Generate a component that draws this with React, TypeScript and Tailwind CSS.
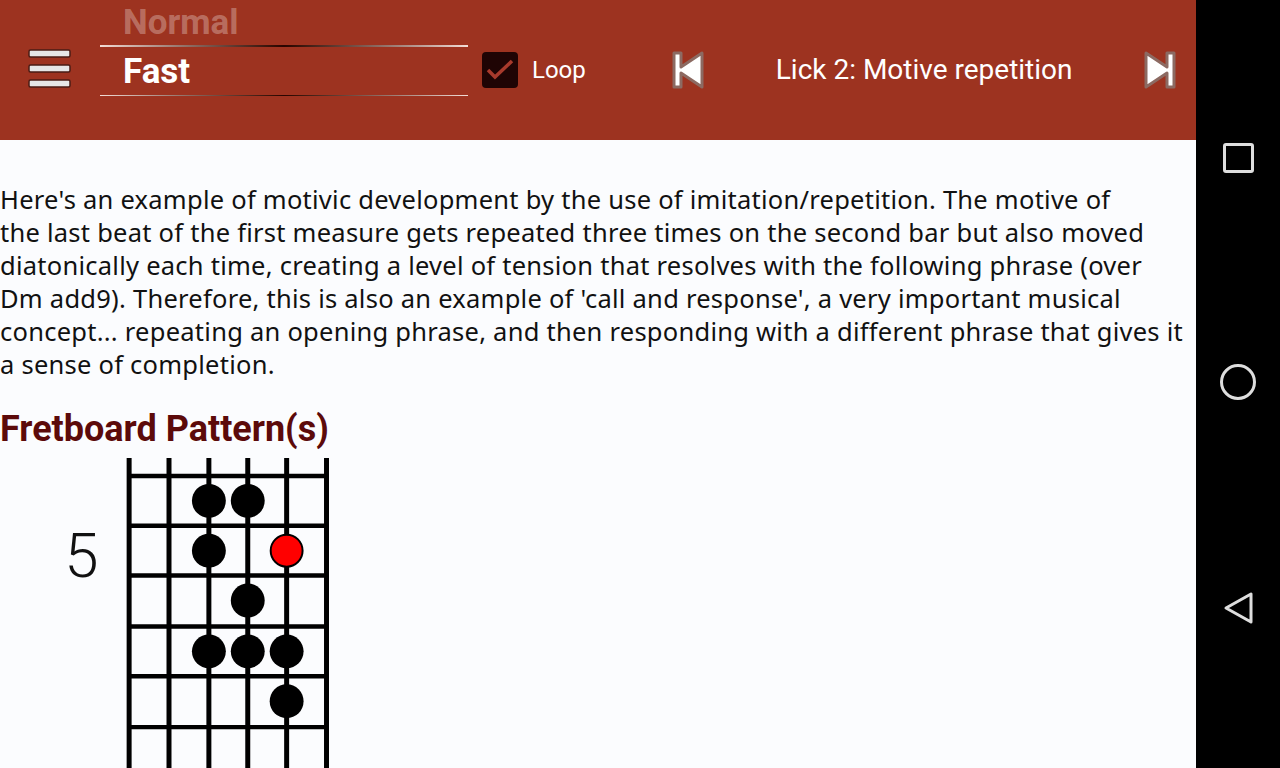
import React from 'react'

const ROBOTO = { fontFamily: 'Roboto, "Noto Sans", sans-serif' }
const BODY = { fontFamily: '"Noto Sans", Roboto, sans-serif' }

function Hamburger() {
  return (
    <svg width="44" height="42" viewBox="0 0 44 42" className="block">
      {[1, 16, 31].map(y => (
        <rect key={y} x="1" y={y} width="41" height="7" rx="1.5" fill="#e6e6e6" stroke="#4a1c14" strokeWidth="1.5" />
      ))}
    </svg>
  )
}

function PickerLine() {
  return <div className="h-[1.5px] w-full bg-linear-to-r from-[#f3ddd6] via-[#2a0400] to-[#f3ddd6]" />
}

function SkipIcon({ dir }: { dir: 'prev' | 'next' }) {
  const shape =
    dir === 'prev'
      ? 'M3 3 H10 V17 L31 3 V37 L10 23 V37 H3 Z'
      : 'M31 3 H24 V17 L3 3 V37 L24 23 V37 H31 Z'
  return (
    <svg width="34" height="40" viewBox="0 0 34 40" className="block">
      <path d={shape} fill="#ffffff" stroke="#8c6a62" strokeWidth="3" strokeLinejoin="round" />
    </svg>
  )
}

function Header() {
  return (
    <div className="flex h-[140px] bg-[#9d3320] text-white" style={ROBOTO}>
      <div className="w-[100px] pl-[28px] pt-[49px]">
        <Hamburger />
      </div>
      <div className="flex w-[368px] flex-col">
        <div className="h-[45px] pl-[23px] text-[35px] font-bold leading-[45px] text-white/30">Normal</div>
        <PickerLine />
        <div className="h-[48px] pl-[23px] pt-[1px] text-[35px] font-bold leading-[48px] text-white">Fast</div>
        <PickerLine />
      </div>
      <div className="flex h-[140px] items-center">
        <div className="ml-[14px] flex h-[36px] w-[36px] items-center justify-center rounded-[4px] bg-[#1f0404]">
          <svg width="36" height="36" viewBox="0 0 36 36">
            <path d="M6 18 L13 25 L30 9" fill="none" stroke="#a83a2c" strokeWidth="3.5" />
          </svg>
        </div>
        <span className="ml-[14px] text-[24px] leading-none">Loop</span>
        <div className="ml-[85px]">
          <SkipIcon dir="prev" />
        </div>
        <span className="ml-[71px] text-[28px] leading-none">Lick 2: Motive repetition</span>
        <div className="ml-[70px]">
          <SkipIcon dir="next" />
        </div>
      </div>
    </div>
  )
}

function Fretboard() {
  const strings = [129, 169, 209, 248, 287, 327]
  const frets = [27, 77, 127, 178, 228, 279]
  const dots: [number, number, boolean][] = [
    [209, 52, false],
    [248, 52, false],
    [209, 102, false],
    [287, 102, true],
    [248, 152, false],
    [209, 203, false],
    [248, 203, false],
    [287, 203, false],
    [287, 253, false],
  ]
  return (
    <svg width="340" height="320" viewBox="0 0 340 320" className="block">
      {strings.map(x => (
        <line key={'s' + x} x1={x} y1="9" x2={x} y2="320" stroke="#000" strokeWidth="5" />
      ))}
      {frets.map(y => (
        <line key={'f' + y} x1="127" y1={y} x2="329" y2={y} stroke="#000" strokeWidth="4.5" />
      ))}
      {dots.map(([x, y, red]) => (
        <circle key={x + '-' + y} cx={x} cy={y} r={red ? 16 : 17} fill={red ? '#ff0000' : '#000'} stroke="#000" strokeWidth={red ? 2 : 0} />
      ))}
      <text x="64" y="128" fontSize="62" fontWeight="300" fill="#111" style={ROBOTO}>5</text>
    </svg>
  )
}

function NavBar() {
  return (
    <div className="flex w-[84px] flex-col items-center justify-center gap-[191px] bg-black">
      <div className="h-[30px] w-[31px] rounded-[3px] border-[3px] border-[#dedede]" />
      <div className="h-[36px] w-[36px] rounded-full border-[3px] border-[#dedede]" />
      <svg width="32" height="34" viewBox="0 0 32 34" className="block">
        <path d="M29 3 L29 31 L4 17 Z" fill="none" stroke="#dedede" strokeWidth="3" strokeLinejoin="round" />
      </svg>
    </div>
  )
}

export default function App() {
  return (
    <div className="flex h-[768px] w-[1280px] overflow-hidden">
      <div className="flex w-[1196px] flex-col overflow-hidden bg-[#fbfcfe]">
        <Header />
        <p className="mt-[43px] whitespace-nowrap text-[25.5px] leading-[33px] tracking-[0.25px] text-[#111]" style={BODY}>
          Here's an example of motivic development by the use of imitation/repetition. The motive of
          <br />
          the last beat of the first measure gets repeated three times on the second bar but also moved
          <br />
          diatonically each time, creating a level of tension that resolves with the following phrase (over
          <br />
          Dm add9). Therefore, this is also an example of 'call and response', a very important musical
          <br />
          concept... repeating an opening phrase, and then responding with a different phrase that gives it
          <br />
          a sense of completion.
        </p>
        <h2 className="mt-[28px] text-[36px] font-bold leading-[40px] text-[#5c0a0a]" style={ROBOTO}>
          Fretboard Pattern(s)
        </h2>
        <Fretboard />
      </div>
      <NavBar />
    </div>
  )
}
